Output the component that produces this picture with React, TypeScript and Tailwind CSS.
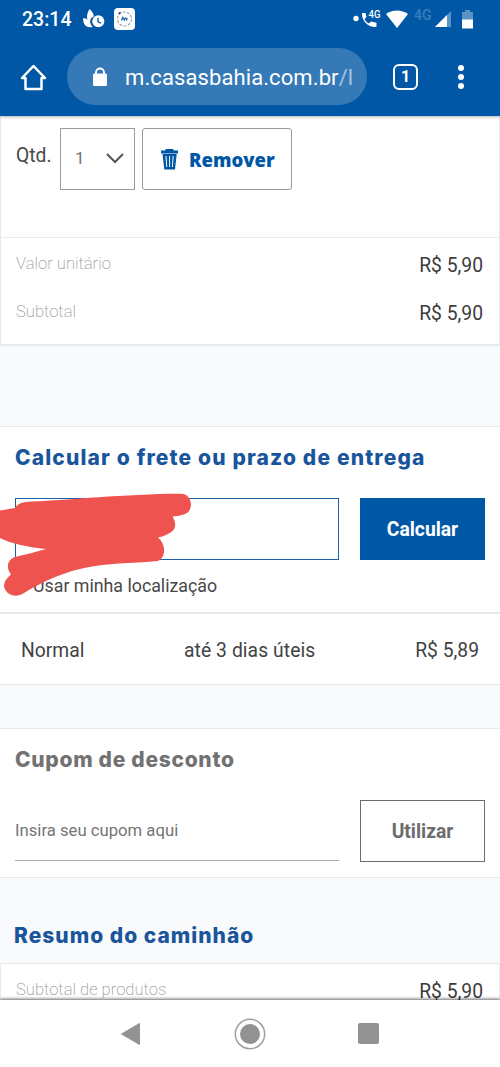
import React from 'react';

const StatusBar: React.FC = () => {
    return (
        <div className="flex h-[38px] items-center pl-[22px] pr-[27px] text-white">
            <span className="w-[50px] pt-[2px] text-[19.500px] leading-[38px] font-medium whitespace-nowrap">23:14</span>
            <svg className="ml-[11px] shrink-0" width="22" height="20" viewBox="0 0 22 20" fill="currentColor">
                <path d="M0 9.500c2.200-.7 4.400.4 5 2.600C3.700 9.600 3.300 4.800 6.700 0c2 2.500 4.300 4.600 4.100 7.600-3 .9-4.400 4-3.100 7.400.4 1.100 1.100 2 2 2.800C5.500 19.500 1.600 17 .6 13.500z" />
                <circle cx="15.300" cy="12.300" r="6" />
                <path d="M15 8.800v4l3 1.300" fill="none" stroke="#0057a5" strokeWidth="1.300" />
            </svg>
            <svg className="ml-[9px] shrink-0" width="21" height="22" viewBox="0 0 21 22">
                <rect width="21" height="22" rx="4" fill="#fff" />
                <circle cx="10.500" cy="11" r="7" fill="none" stroke="#8fa3b5" strokeWidth="1.100" strokeDasharray="3 1.400" />
                <path d="M4.500 6l2-2" stroke="#294e70" strokeWidth="1.500" />
                <path d="M7.500 12.500l1.300-3 1.500 2.500 1-2 1.600.7-.4 1.800" fill="none" stroke="#1d629f" strokeWidth="1.300" />
            </svg>
            <svg className="ml-auto shrink-0" width="28" height="20" viewBox="0 0 28 20" fill="currentColor">
                <circle cx="3" cy="9.500" r="2.700" />
                <path d="M9 4h3.500l1 4-2 2c1.200 2.400 2.500 3.700 4.500 4.500l2-2 5.500 1.300v4c-7.500.8-14.800-4.800-14.500-13.800z" />
                <text x="15.500" y="9" fontSize="10.500" fontWeight="500" textLength="12" lengthAdjust="spacingAndGlyphs">4G</text>
            </svg>
            <svg className="ml-[5px] shrink-0" width="22" height="18" viewBox="0 0 22 18" fill="currentColor">
                <path d="M0 4C6-.7 16-.7 22 4L11 18z" />
            </svg>
            <span className="ml-[6px] h-[38px] w-[19px] text-[14px] leading-[31px] font-medium text-[#3a7dba]">4G</span>
            <svg className="ml-[2px] shrink-0" width="16" height="16" viewBox="0 0 16 16">
                <path d="M16 0v16H0z" fill="#5c93c5" />
                <path d="M12 4v12H0z" fill="#fff" />
            </svg>
            <svg className="ml-[11px] shrink-0" width="11" height="19" viewBox="0 0 11 19">
                <path d="M3 0h5v2h3v8H0V2h3z" fill="#5c93c5" />
                <path d="M0 9.500h11v9H0z" fill="#fff" />
            </svg>
        </div>
    );
};

const BrowserBar: React.FC = () => {
    return (
        <div className="flex items-center pt-[10px] pl-[20px] text-white">
            <svg className="shrink-0" width="27" height="28" viewBox="0 0 27 28" fill="none" stroke="currentColor" strokeWidth="2.500" strokeLinejoin="round" strokeLinecap="round">
                <path d="M2 15L13.500 3 25 15H21.500V26H5.500V15z" />
            </svg>
            <div className="ml-5 flex h-[57px] w-[300px] shrink-0 items-center rounded-full bg-[#357ab7] pl-[25px]">
                <svg className="shrink-0" width="16" height="20" viewBox="0 0 16 20">
                    <path d="M4 8V5.500a4 4 0 0 1 8 0V8" fill="none" stroke="#fff" strokeWidth="1.800" />
                    <rect x="1" y="6.500" width="14" height="12.500" rx="1.500" fill="#fff" />
                </svg>
                <span className="ml-[17px] pt-[1px] text-[22px] tracking-[0.1px] whitespace-nowrap">
                    m.casasbahia.com.br<span className="text-[#a4c4e1]">/l</span>
                </span>
            </div>
            <div className="ml-[26px] flex h-[26px] w-[25px] items-center justify-center rounded-[6px] border-2 border-white text-[16px] font-bold">1</div>
            <div className="ml-[40px] flex flex-col gap-[3px]">
                <span className="h-[6px] w-[6px] rounded-full bg-white" />
                <span className="h-[6px] w-[6px] rounded-full bg-white" />
                <span className="h-[6px] w-[6px] rounded-full bg-white" />
            </div>
        </div>
    );
};

const Heading: React.FC<{ className: string; children: React.ReactNode }> = ({ className, children }) => (
    <h2 className={`pt-px font-[Inter,sans-serif] text-[21px] leading-[30px] font-extrabold whitespace-nowrap ${className}`}>{children}</h2>
);

const PriceRow: React.FC<{ label: string; value: string }> = ({ label, value }) => (
    <div className="flex h-12 items-center justify-between pr-4 pl-[15px]">
        <span className="pb-[3px] text-[16.600px] font-extralight text-[#999]">{label}</span>
        <span className="text-[19.300px] text-[#3c3c3c]">{value}</span>
    </div>
);

const CartItem: React.FC = () => {
    return (
        <section className="h-[230px] border-x border-b-2 border-[#e6eaee] bg-white">
            <div className="flex h-[122px] items-start border-b border-[#e9edf0] pt-[12px] pl-[15px]">
                <span className="w-[43px] pt-[13px] text-[19.300px] leading-[30px] text-[#484848]">Qtd.</span>
                <div className="ml-px flex h-[62px] w-[75px] items-center border border-[#999b9e] pl-[14px] text-[17px] text-[#757575]">
                    1
                    <svg className="ml-[21px]" width="18" height="12" viewBox="0 0 18 12" fill="none" stroke="#555" strokeWidth="2">
                        <path d="M1 1l8 8 8-8" />
                    </svg>
                </div>
                <button className="ml-[7px] flex h-[62px] w-[150px] items-center rounded-[3px] border border-[#999b9e] pl-[18px] text-[#0057a5]">
                    <svg width="18" height="21" viewBox="0 0 18 21" fill="currentColor">
                        <path d="M5 0h7l1 1.500h4v3H0v-3h4z" />
                        <path d="M1.500 5h14.200L14 20.500H3.300z" />
                        <path d="M5 7l.8 11M8.600 7v11M12.200 7l-.8 11" stroke="#fff" strokeWidth="1" />
                    </svg>
                    <span className="ml-[10px] pt-[2px] font-['Open_Sans',sans-serif] text-[18.500px] font-extrabold">Remover</span>
                </button>
            </div>
            <div className="pt-[4px]">
                <PriceRow label="Valor unitário" value="R$ 5,90" />
                <PriceRow label="Subtotal" value="R$ 5,90" />
            </div>
        </section>
    );
};

const Shipping: React.FC = () => {
    return (
        <section className="relative mt-[80px] h-[259px] border-y border-[#e6eaee] bg-white">
            <div className="h-[187px] border-b-2 border-[#e3e8eb] px-[15px] pt-[15px]">
                <Heading className="tracking-[1.15px] text-[#18559c]">Calcular o frete ou prazo de entrega</Heading>
                <div className="mt-[25px] flex gap-[21px]">
                    <div className="h-[62px] w-[324px] border border-[#1c60a5]" />
                    <button className="h-[62px] w-[125px] bg-[#0057a5] pt-[2px] text-[19.300px] font-bold text-white">Calcular</button>
                </div>
                <div className="flex pt-[11px] text-[17.800px] leading-[30px] text-[#484848]">
                    <svg className="mt-[6px] mr-[3px]" width="15" height="18" viewBox="0 0 15 18">
                        <path d="M7 17l2.500-7L0 8z" fill="#484848" />
                    </svg>
                    Usar minha localização
                </div>
            </div>
            <div className="flex h-[72px] items-center px-[21px] pt-[3px] text-[19.300px] text-[#424242]">
                <span className="w-[163px]">Normal</span>
                <span className="tracking-[0.08px]">até 3 dias úteis</span>
                <span className="ml-auto">R$ 5,89</span>
            </div>
            {/* red marker strokes hiding the postal code */}
            <svg className="absolute top-[63px] left-0" width="200" height="112" viewBox="0 490 200 112">
                <path
                    d="M0 510.500L15 508C18 503 23 502 32 501.500C70 500 122 494 181 493.700C193 494 194 511 185 514Q180 516 172.500 516.500C178 526 176 533 158 537.500C166 544 166 556 159 560.500C151 563 120 562 92 566.500C65 571 44 581 24 593C15 599 5 594 4 586C4 581 8 577 11 574.500C5 567 8 558 17 556.500C28 554 36 552 46 549Q16 546 0 538z"
                    fill="#ef5350"
                />
            </svg>
        </section>
    );
};

const Coupon: React.FC = () => {
    return (
        <section className="mt-[43px] h-[150px] border-y border-[#e6eaee] bg-white px-[15px] pt-[15px]">
            <Heading className="tracking-[0.7px] text-[#727272]">Cupom de desconto</Heading>
            <div className="mt-[25px] flex gap-[21px]">
                <div className="h-[61px] w-[324px] border-b border-[#adadad] text-[16.700px] leading-[61px] text-[#757575]">Insira seu cupom aqui</div>
                <button className="h-[62px] w-[125px] border border-[#6c6c6c] pt-[2px] text-[19.300px] font-bold text-[#6c6c6c]">Utilizar</button>
            </div>
        </section>
    );
};

const NavigationBar: React.FC = () => {
    return (
        <nav className="relative flex h-[67px] items-center bg-white pl-[120px] shadow-[0_-1px_3px_rgba(0,0,0,0.6)]">
            <svg width="21" height="24" viewBox="0 0 21 24">
                <path d="M1.500 12L19.500 1.500v21z" fill="#929292" stroke="#929292" strokeLinejoin="round" />
            </svg>
            <svg className="ml-[93px]" width="32" height="32" viewBox="0 0 32 32">
                <circle cx="16" cy="16" r="14.700" fill="none" stroke="#a0a0a0" strokeWidth="1.500" />
                <circle cx="16" cy="16" r="10" fill="#929292" />
            </svg>
            <span className="ml-[92px] h-[21px] w-[21px] rounded-[2px] bg-[#929292]" />
        </nav>
    );
};

const App: React.FC = () => {
    return (
        <div className="flex h-[1067px] w-[500px] flex-col overflow-hidden bg-[#f8fafc] font-[Roboto,sans-serif]">
            <header className="relative z-10 h-[116px] shrink-0 bg-[#0057a5] shadow-[0_1px_3px_rgba(0,0,0,0.3)]">
                <StatusBar />
                <BrowserBar />
            </header>
            <main className="h-[884px] shrink-0 overflow-hidden">
                <CartItem />
                <Shipping />
                <Coupon />
                <Heading className="mt-[42px] pl-[14px] tracking-[1px] text-[#18559c]">Resumo do caminhão</Heading>
                <section className="mt-[12px] border border-[#e6eaee] bg-white pt-[4px]">
                    <PriceRow label="Subtotal de produtos" value="R$ 5,90" />
                </section>
            </main>
            <NavigationBar />
        </div>
    );
};

export default App;
